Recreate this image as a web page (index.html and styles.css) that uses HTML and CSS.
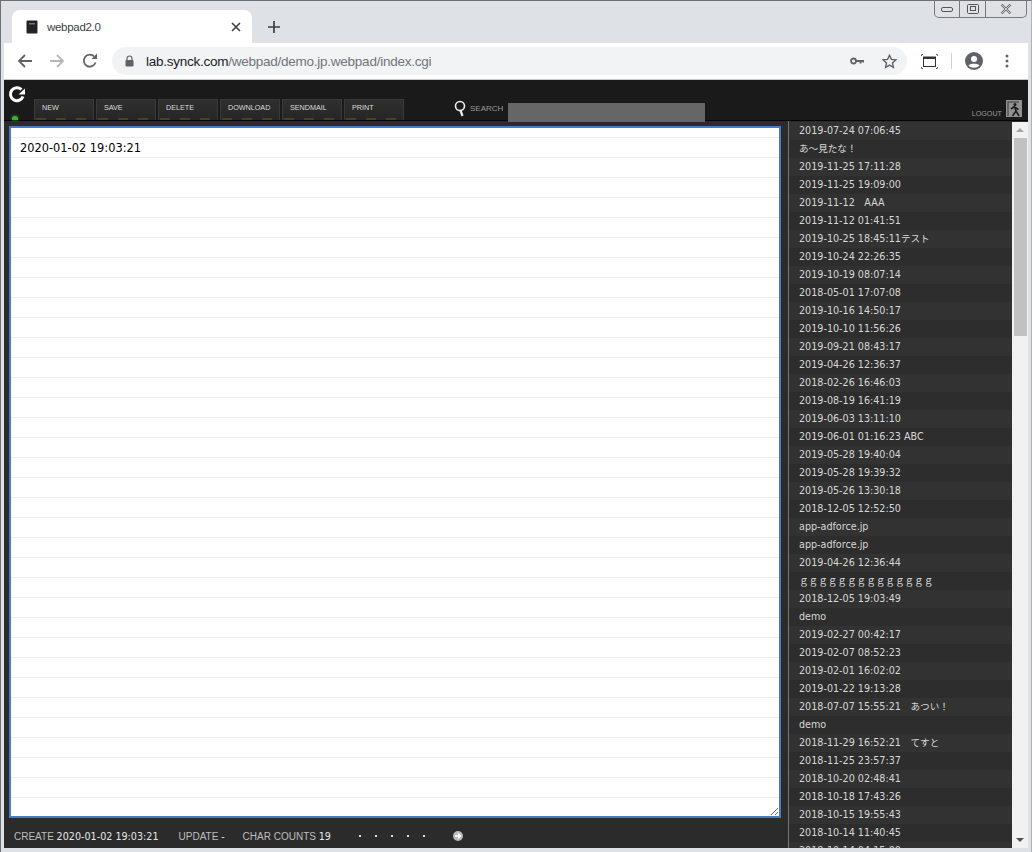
FILE: index.html
```html
<!DOCTYPE html>
<html lang="ja">
<head>
<meta charset="utf-8">
<title>webpad2.0</title>
<link rel="stylesheet" href="styles.css">
</head>
<body>
<div class="window">
  <div class="tabstrip">
    <div class="tab">
      <svg class="favicon" width="12" height="14" viewBox="0 0 12 14"><rect x="0.5" y="0.5" width="11" height="13" rx="1" fill="#222"/><rect x="3" y="3" width="6" height="1.5" fill="#777"/><rect x="11" y="1" width="1" height="12" fill="#999"/></svg>
      <span class="tab-title">webpad2.0</span>
      <svg class="tab-close" width="10" height="10" viewBox="0 0 10 10"><path d="M1 1l8 8M9 1l-8 8" stroke="#3c4043" stroke-width="1.6" fill="none"/></svg>
    </div>
    <svg class="newtab" width="12" height="12" viewBox="0 0 12 12"><path d="M6 0v12M0 6h12" stroke="#3c4043" stroke-width="1.7" fill="none"/></svg>
    <div class="winctl">
      <span class="winbtn btn-min"><svg width="12" height="6" viewBox="0 0 12 6"><rect x="0.5" y="0.5" width="11" height="4" rx="1.5" fill="none" stroke="#555"/></svg></span>
      <span class="winbtn btn-max"><svg width="12" height="10" viewBox="0 0 12 10"><rect x="0.5" y="0.5" width="11" height="9" rx="1" fill="none" stroke="#555"/><rect x="3.5" y="2.5" width="5" height="4" fill="none" stroke="#555"/></svg></span>
      <span class="winbtn btn-close"><svg width="12" height="10" viewBox="0 0 12 10"><path d="M1.5 0.5l9 9M10.500 0.5l-9 9" stroke="#666" stroke-width="2.2" fill="none"/><path d="M1.500 0.500l9 9M10.500 0.500l-9 9" stroke="#e6e8ec" stroke-width="0.8" fill="none"/></svg></span>
    </div>
  </div>
  <div class="toolbar">
    <svg class="nav-icon" width="16" height="14" viewBox="0 0 16 14"><path d="M15 7H2M8 1L2 7l6 6" stroke="#5f6368" stroke-width="1.800" fill="none"/></svg>
    <svg class="nav-icon" width="16" height="14" viewBox="0 0 16 14"><path d="M1 7h13M8 1l6 6-6 6" stroke="#b5b7ba" stroke-width="1.800" fill="none"/></svg>
    <svg class="nav-icon reload" width="16" height="16" viewBox="0 0 16 16"><path d="M13.500 9.500A6 6 0 1 1 12.200 3.500" stroke="#5f6368" stroke-width="1.800" fill="none"/><path d="M9.500 6H15V0.500z" fill="#5f6368"/></svg>
    <div class="omnibox">
      <svg class="lock" width="9" height="12" viewBox="0 0 9 12"><path d="M2 5V3.500a2.500 2.500 0 0 1 5 0V5" stroke="#5f6368" stroke-width="1.200" fill="none"/><rect x="0.500" y="5" width="8" height="6.500" rx="1" fill="#5f6368"/></svg>
      <span class="url"><span class="url-host">lab.synck.com</span>/webpad/demo.jp.webpad/index.cgi</span>
      <svg class="key" width="14" height="8" viewBox="0 0 14 8"><circle cx="3.500" cy="4" r="2.500" fill="none" stroke="#5f6368" stroke-width="1.800"/><path d="M6 3h8v2.500h-1.500V5h-1v1.500H9.500V5H6z" fill="#5f6368"/></svg>
      <svg class="star" width="15" height="15" viewBox="0 0 15 15"><path d="M7.500 1.300l1.900 4.100 4.400.5-3.300 3 .9 4.400-3.900-2.200-3.900 2.200.9-4.400-3.300-3 4.400-.5z" fill="none" stroke="#5f6368" stroke-width="1.400"/></svg>
    </div>
    <svg class="capture" width="17" height="15" viewBox="0 0 17 15"><path d="M0.500 2V0.500H2M15 0.500h1.500V2M0.500 13v1.500H2M15 14.500h1.500V13" stroke="#2e8b3d" fill="none"/><rect x="2.500" y="3" width="12" height="9.500" fill="none" stroke="#333"/><rect x="2.500" y="3" width="12" height="2" fill="#333"/></svg>
    <span class="tool-sep"></span>
    <svg class="account" width="18" height="18" viewBox="0 0 18 18"><circle cx="9" cy="9" r="9" fill="#5f6368"/><circle cx="9" cy="7" r="3" fill="#fff"/><path d="M3.500 13.500c1.500-2.500 9.500-2.500 11 0-2.800 3-8.200 3-11 0z" fill="#fff"/></svg>
    <svg class="menu" width="4" height="14" viewBox="0 0 4 14"><circle cx="2" cy="2" r="1.500" fill="#5f6368"/><circle cx="2" cy="7" r="1.500" fill="#5f6368"/><circle cx="2" cy="12" r="1.500" fill="#5f6368"/></svg>
  </div>
  <div class="app">
    <header class="app-head">
      <div class="brand">
        <svg width="18" height="18" viewBox="0 0 18 18"><path d="M15 11.500A6.500 6.500 0 1 1 13.500 4.500" stroke="#fff" stroke-width="3" fill="none"/><path d="M10.500 9.500H17V3.500z" fill="#fff"/></svg>
        <span class="led"></span>
      </div>
      <nav class="menu-buttons">
        <a class="mbtn">NEW</a>
        <a class="mbtn">SAVE</a>
        <a class="mbtn">DELETE</a>
        <a class="mbtn">DOWNLOAD</a>
        <a class="mbtn">SENDMAIL</a>
        <a class="mbtn">PRINT</a>
      </nav>
      <div class="search">
        <svg class="glass" width="12" height="17" viewBox="0 0 12 17"><circle cx="6" cy="6" r="4.500" fill="none" stroke="#eee" stroke-width="1.600"/><path d="M6.500 10.500l2 5.500" stroke="#eee" stroke-width="2.200"/></svg>
        <span class="search-label">SEARCH</span>
        <input class="search-input" type="text" aria-label="search">
      </div>
      <div class="logout">
        <span class="logout-label">LOGOUT</span>
        <svg width="16" height="17" viewBox="0 0 16 17"><rect width="16" height="17" fill="#929292"/><path d="M2 16V2h11" fill="none" stroke="#555" stroke-width="1.500"/><circle cx="9" cy="4.500" r="1.500" fill="#1d1d1d"/><path d="M8.500 6.500L5 9M8.500 6.500l1.500 4.500L6.500 16M10 11l3 5M8.500 7l4 2.500" stroke="#1d1d1d" stroke-width="1.600" fill="none"/></svg>
      </div>
    </header>
    <div class="app-body">
      <main class="editor-pane">
        <div class="editor-wrap">
          <textarea class="editor" spellcheck="false">2020-01-02 19:03:21</textarea>
        </div>
        <footer class="statusbar">
          <span class="stat">CREATE <b>2020-01-02 19:03:21</b></span>
          <span class="stat stat-update">UPDATE <b>-</b></span>
          <span class="stat">CHAR COUNTS <b>19</b></span>
          <span class="dots"><i></i><i></i><i></i><i></i><i></i></span>
          <svg class="go" width="10" height="10" viewBox="0 0 10 10"><circle cx="5" cy="5" r="5" fill="#bbb"/><path d="M2 5h5M5 2.500L7.500 5 5 7.500" stroke="#fff" stroke-width="1.300" fill="none"/></svg>
        </footer>
      </main>
      <aside class="side">
        <ul class="memo-list">
          <li>2019-07-24 07:06:45</li>
          <li>あ～見たな！</li>
          <li>2019-11-25 17:11:28</li>
          <li>2019-11-25 19:09:00</li>
          <li>2019-11-12　AAA</li>
          <li>2019-11-12 01:41:51</li>
          <li>2019-10-25 18:45:11テスト</li>
          <li>2019-10-24 22:26:35</li>
          <li>2019-10-19 08:07:14</li>
          <li>2018-05-01 17:07:08</li>
          <li>2019-10-16 14:50:17</li>
          <li>2019-10-10 11:56:26</li>
          <li>2019-09-21 08:43:17</li>
          <li>2019-04-26 12:36:37</li>
          <li>2018-02-26 16:46:03</li>
          <li>2019-08-19 16:41:19</li>
          <li>2019-06-03 13:11:10</li>
          <li>2019-06-01 01:16:23 ABC</li>
          <li>2019-05-28 19:40:04</li>
          <li>2019-05-28 19:39:32</li>
          <li>2019-05-26 13:30:18</li>
          <li>2018-12-05 12:52:50</li>
          <li>app-adforce.jp</li>
          <li>app-adforce.jp</li>
          <li>2019-04-26 12:36:44</li>
          <li>ｇｇｇｇｇｇｇｇｇｇｇｇｇｇ</li>
          <li>2018-12-05 19:03:49</li>
          <li>demo</li>
          <li>2019-02-27 00:42:17</li>
          <li>2019-02-07 08:52:23</li>
          <li>2019-02-01 16:02:02</li>
          <li>2019-01-22 19:13:28</li>
          <li>2018-07-07 15:55:21　あつい！</li>
          <li>demo</li>
          <li>2018-11-29 16:52:21　てすと</li>
          <li>2018-11-25 23:57:37</li>
          <li>2018-10-20 02:48:41</li>
          <li>2018-10-18 17:43:26</li>
          <li>2018-10-15 19:55:43</li>
          <li>2018-10-14 11:40:45</li>
          <li>2018-10-14 04:15:00</li>
        </ul>
        <div class="scrollbar">
          <span class="arrow arrow-up"></span>
          <span class="thumb"></span>
          <span class="arrow arrow-down"></span>
        </div>
      </aside>
    </div>
  </div>
</div>
</body>
</html>
```
FILE: styles.css
```css
* { box-sizing: border-box; }
html, body { margin: 0; height: 100%; overflow: hidden; }
body { background: #dee1e6; font-family: "Liberation Sans", Arial, sans-serif; }

.window {
  width: 1032px;
  height: 852px;
  display: flex;
  flex-direction: column;
  border: 1px solid #6e7072;
  border-bottom: 0;
  border-right-color: #b0b2b5;
  padding-bottom: 4px;
  background: #dee1e6;
}

.tabstrip {
  height: 42px;
  display: flex;
  align-items: flex-end;
  padding-left: 11px;
  position: relative;
  flex: none;
}
.tab {
  width: 240px;
  height: 33px;
  background: #fff;
  border-radius: 8px 8px 0 0;
  display: flex;
  align-items: center;
  padding: 0 11px 0 14px;
}
.favicon { flex: none; }
.tab-title { font-size: 11.500px; color: #3c4043; margin-left: 9px; flex: 1; letter-spacing: -0.300px; }
.newtab { margin: 0 0 10px 16px; }
.winctl {
  position: absolute;
  top: -1px;
  right: 4px;
  width: 93px;
  height: 18px;
  display: flex;
  border: 1px solid #77797c;
  border-top: 0;
  border-radius: 0 0 5px 5px;
}
.winbtn { display: flex; align-items: center; justify-content: center; height: 100%; }
.btn-min { width: 25px; border-right: 1px solid #77797c; padding-top: 3px; }
.btn-max { width: 26px; border-right: 1px solid #77797c; }
.btn-close { flex: 1; }

.toolbar {
  height: 37px;
  flex: none;
  margin: 0 3px;
  background: #fff;
  display: flex;
  align-items: center;
  padding-left: 13px;
  gap: 16px;
  border-bottom: 1px solid #c8c8c8;
}
.reload { margin-left: 1px; }
.omnibox {
  margin-left: -2px;
  width: 795px;
  height: 28px;
  border-radius: 14px;
  background: #f1f3f4;
  display: flex;
  align-items: center;
  padding: 0 10px 0 13px;
}
.url { font-size: 13.500px; color: #70757a; margin-left: 12px; flex: 1; letter-spacing: -0.250px; white-space: nowrap; }
.url-host { color: #202124; }
.key { margin-right: 18px; }
.capture { margin-left: -2px; }
.tool-sep { width: 1px; height: 16px; background: #d0d2d5; margin-left: -3px; }
.account { margin-left: -3px; }
.menu { margin-left: 6px; }

.app {
  flex: 1;
  min-height: 0;
  margin: 0 3px;
  background: #2b2b2b;
  display: flex;
  flex-direction: column;
  overflow: hidden;
}
.app-head {
  height: 41px;
  flex: none;
  background: #1a1a1a;
  display: flex;
  align-items: flex-end;
  border-bottom: 1px solid #050505;
  position: relative;
}
.brand { width: 30px; height: 100%; flex: none; position: relative; padding: 5px 0 0 4px; }
.brand svg { display: block; }
.led { position: absolute; left: 8px; bottom: 0; width: 6px; height: 4px; border-radius: 3px 3px 0 0; background: #2fb52f; box-shadow: 0 0 3px #2fb52f; }

.menu-buttons { display: flex; gap: 2px; flex: none; }
.mbtn {
  width: 60px;
  height: 21px;
  background: linear-gradient(#2f2f2f, #262626);
  border: 1px solid #3a3a3a;
  border-bottom: 0;
  font-size: 7.200px;
  color: #dcdcdc;
  padding: 3px 0 0 7px;
  position: relative;
}
.mbtn::after {
  content: "";
  position: absolute;
  left: 0;
  right: 0;
  bottom: 0;
  height: 2px;
  background: repeating-linear-gradient(90deg, transparent 0 1px, #45421f 1px 11px, transparent 11px 20px);
}
.search { display: flex; align-items: flex-end; margin-left: 50px; flex: none; }
.glass { margin: 0 4px 3px 0; }
.search-label { font-size: 8px; color: #999; margin-bottom: 7px; }
.search-input { width: 197px; height: 19px; margin: 0 0 -2px 5px; padding: 0; border: 0; background: #666; display: block; }
.logout { margin-left: auto; display: flex; align-items: flex-end; padding: 0 6px 3px 0; }
.logout-label { font-size: 7.200px; color: #999; margin: 0 4px -1px 0; }
.logout svg { display: block; }

.app-body { flex: 1; min-height: 0; display: flex; }
.editor-pane { width: 785px; flex: none; display: flex; flex-direction: column; border-right: 1px solid #777; }
.editor-wrap { flex: 1; min-height: 0; padding: 5px 7px 0 5px; }
.editor {
  display: block;
  width: 100%;
  height: 692px;
  margin: 0;
  padding: 10px 10px 0 9px;
  border: 2px solid #4a7cc4;
  border-radius: 0;
  outline: 0;
  font-family: "DejaVu Sans", sans-serif;
  font-size: 11.400px;
  line-height: 20px;
  color: #000;
  background-color: #fff;
  background-image: repeating-linear-gradient(#fff 0 19px, #ececec 19px 20px);
  background-position: 0 -10px;
  background-attachment: local;
}
.statusbar {
  height: 30px;
  flex: none;
  display: flex;
  align-items: center;
  padding: 6px 0 0 10px;
  font-size: 10px;
  color: #bdbdbd;
}
.stat { margin-right: 20px; white-space: nowrap; }
.stat-update { margin-right: 18px; }
.stat b { font-family: "DejaVu Sans", sans-serif; font-size: 9.600px; font-weight: normal; color: #e6e6e6; }
.dots { display: flex; gap: 14px; margin: 0 0 0 8px; }
.dots i { width: 2px; height: 2px; background: #ddd; display: block; }
.go { margin-left: 28px; }

.side { flex: 1; min-width: 0; display: flex; padding-top: 1px; }
.memo-list {
  flex: 1;
  min-width: 0;
  margin: 0;
  padding: 0;
  list-style: none;
  overflow: hidden;
  background: #323232;
}
.memo-list li {
  height: 18px;
  line-height: 18px;
  padding-left: 10px;
  font-family: "DejaVu Sans", "Noto Sans CJK JP", sans-serif;
  font-size: 9.600px;
  color: #d8d8d8;
  white-space: nowrap;
}
.memo-list li:nth-child(even) { background: #2d2d2d; }
.scrollbar { width: 16px; flex: none; background: #f1f1f1; display: flex; flex-direction: column; align-items: center; }
.thumb { width: 13px; height: 198px; background: #c1c1c1; }
.arrow { display: block; width: 0; height: 0; border-left: 4px solid transparent; border-right: 4px solid transparent; }
.arrow-up { border-bottom: 4px solid #a3a3a3; margin: 6px 0; }
.arrow-down { border-top: 4px solid #505050; margin-top: auto; margin-bottom: 6px; }
```
